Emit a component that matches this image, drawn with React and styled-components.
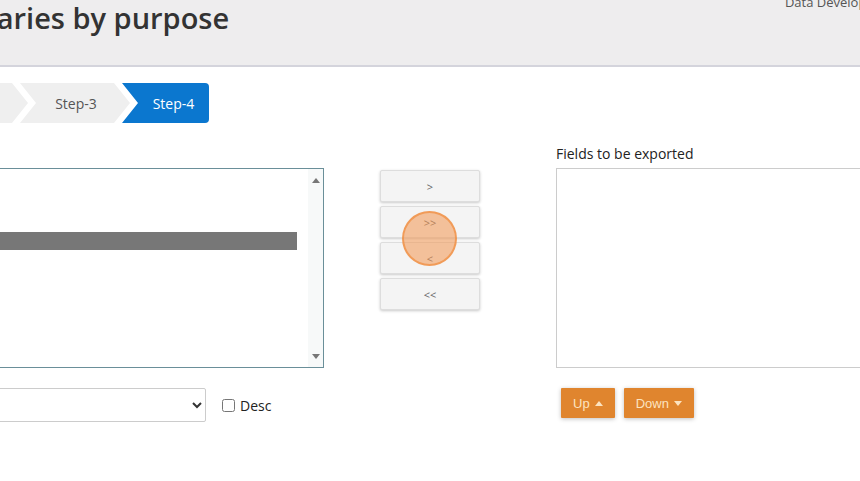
import React from "react";
import styled, { createGlobalStyle } from "styled-components";

const GlobalStyle = createGlobalStyle`
  html, body {
    margin: 0;
    padding: 0;
    background: #fff;
    font-family: "Open Sans", "Liberation Sans", sans-serif;
    overflow: hidden;
  }
`;

const Page = styled.div`
  width: 860px;
  height: 481px;
  overflow: hidden;
  background: #fff;
`;

const Header = styled.header`
  height: 65px;
  background: #eeedee;
  border-bottom: 2px solid #d4d4dc;
  display: flex;
  align-items: flex-start;
  justify-content: space-between;
  overflow: hidden;
`;

const Title = styled.h1`
  margin: 0 0 0 -93px;
  font-size: 29px;
  line-height: 36px;
  font-weight: 600;
  color: #333;
  white-space: nowrap;
`;

const UserName = styled.div`
  margin: -7px -19px 0 0;
  font-size: 13px;
  line-height: 18px;
  color: #555;
  white-space: nowrap;
`;

const Body = styled.div`
  margin-left: -200px;
  padding-top: 16px;
`;

const Steps = styled.div`
  display: flex;
  padding-left: 16px;
  height: 40px;
`;

const Step = styled.div`
  flex: 0 0 ${(p) => (p.$last ? "87px" : "110px")};
  margin-left: -8px;
  &:first-child {
    margin-left: 0;
  }
  display: flex;
  align-items: center;
  justify-content: center;
  box-sizing: border-box;
  padding-left: 16px;
  padding-right: ${(p) => (p.$last ? "0" : "14px")};
  font-size: 14px;
  color: ${(p) => (p.$active ? "#fff" : "#555")};
  background: ${(p) => (p.$active ? "#0b77cf" : "#efefef")};
  border-radius: ${(p) => (p.$last ? "0 4px 4px 0" : "0")};
  clip-path: ${(p) =>
    p.$last
      ? "polygon(0 0, 100% 0, 100% 100%, 0 100%, 16px 50%)"
      : "polygon(0 0, calc(100% - 16px) 0, 100% 50%, calc(100% - 16px) 100%, 0 100%, 16px 50%)"};
`;

const Columns = styled.div`
  display: flex;
  align-items: flex-start;
  margin-top: 21px;
`;

const LeftCol = styled.div`
  flex: 0 0 524px;
`;

const Label = styled.div`
  font-size: 14px;
  line-height: 20px;
  color: #222;
  margin-bottom: 4px;
`;

const ListBox = styled.div`
  height: 200px;
  box-sizing: border-box;
  border: 1px solid #6a8f99;
  display: flex;
  background: #fff;
`;

const ListRows = styled.div`
  flex: 1;
  padding: 9px 11px 0 0;
`;

const Row = styled.div`
  height: 18px;
  line-height: 18px;
  font-size: 13px;
  padding-left: 4px;
  color: ${(p) => (p.$selected ? "#fff" : "#333")};
  background: ${(p) => (p.$selected ? "#777" : "transparent")};
`;

const ScrollTrack = styled.div`
  flex: 0 0 15px;
  background: #f7f9f9;
  display: flex;
  flex-direction: column;
  justify-content: space-between;
  align-items: center;
  padding: 9px 0 8px;
`;

const SortRow = styled.div`
  display: flex;
  align-items: center;
  margin-top: 20px;
`;

const SortSelect = styled.select`
  flex: 0 0 406px;
  height: 34px;
  border: 1px solid #ccc;
  border-radius: 2px;
  background: #fff;
  font-family: inherit;
  font-size: 13px;
  color: #333;
  padding: 0 6px;
`;

const CheckLabel = styled.label`
  display: flex;
  align-items: center;
  gap: 5px;
  margin-left: 16px;
  font-size: 14px;
  color: #222;

  input {
    margin: 0;
    width: 13px;
    height: 13px;
  }
`;

const MoveCol = styled.div`
  position: relative;
  flex: 0 0 100px;
  margin-left: 56px;
  padding-top: 26px;
  display: flex;
  flex-direction: column;
  gap: 4px;
`;

const MoveButton = styled.button`
  height: 32px;
  border: 1px solid #ddd;
  border-radius: 2px;
  background: #f4f4f4;
  box-shadow: 0 1px 3px rgba(0, 0, 0, 0.22);
  font-family: inherit;
  font-size: 11px;
  color: #666;
  cursor: pointer;
`;

const ClickMark = styled.span`
  position: absolute;
  left: 22px;
  top: 67px;
  width: 51px;
  height: 51px;
  border-radius: 50%;
  background: rgba(243, 150, 80, 0.55);
  border: 2px solid rgba(240, 140, 60, 0.7);
  pointer-events: none;
`;

const RightCol = styled.div`
  flex: 0 0 400px;
  margin-left: 76px;
`;

const ExportBox = styled.div`
  height: 200px;
  box-sizing: border-box;
  border: 1px solid #ccc;
  background: #fff;
`;

const OrderRow = styled.div`
  display: flex;
  gap: 9px;
  margin-top: 20px;
  padding-left: 5px;
`;

const OrangeButton = styled.button`
  display: flex;
  align-items: center;
  gap: 5px;
  height: 30px;
  padding: 0 12px;
  border: none;
  border-radius: 1px;
  background: #e0852e;
  box-shadow: 0 1px 4px rgba(0, 0, 0, 0.25);
  color: #fce3c0;
  font-family: "Liberation Sans", Arial, sans-serif;
  font-size: 13px;
  cursor: pointer;
`;

const Caret = ({ down, color = "currentColor" }) => (
  <svg width="8" height="5" viewBox="0 0 8 5">
    <path d={down ? "M0 0 H8 L4 5 Z" : "M0 5 H8 L4 0 Z"} fill={color} />
  </svg>
);

const fields = ["Purpose", "Category", "Owner", "Summary", "Status", "Region"];

export default function App() {
  return (
    <Page>
      <GlobalStyle />
      <Header>
        <Title>Summaries by purpose</Title>
        <UserName>Data Developer</UserName>
      </Header>
      <Body>
        <Steps>
          <Step>Step-1</Step>
          <Step>Step-2</Step>
          <Step>Step-3</Step>
          <Step $active $last>
            Step-4
          </Step>
        </Steps>
        <Columns>
          <LeftCol>
            <Label>Available fields</Label>
            <ListBox>
              <ListRows>
                {fields.map((f, i) => (
                  <Row key={f} $selected={i === 3}>
                    {f}
                  </Row>
                ))}
              </ListRows>
              <ScrollTrack>
                <Caret color="#777" />
                <Caret down color="#777" />
              </ScrollTrack>
            </ListBox>
            <SortRow>
              <SortSelect defaultValue="">
                <option value=""></option>
              </SortSelect>
              <CheckLabel>
                <input type="checkbox" />
                Desc
              </CheckLabel>
            </SortRow>
          </LeftCol>
          <MoveCol>
            <MoveButton>&gt;</MoveButton>
            <MoveButton>&gt;&gt;</MoveButton>
            <MoveButton>&lt;</MoveButton>
            <MoveButton>&lt;&lt;</MoveButton>
            <ClickMark />
          </MoveCol>
          <RightCol>
            <Label>Fields to be exported</Label>
            <ExportBox />
            <OrderRow>
              <OrangeButton>
                Up <Caret />
              </OrangeButton>
              <OrangeButton>
                Down <Caret down />
              </OrangeButton>
            </OrderRow>
          </RightCol>
        </Columns>
      </Body>
    </Page>
  );
}
